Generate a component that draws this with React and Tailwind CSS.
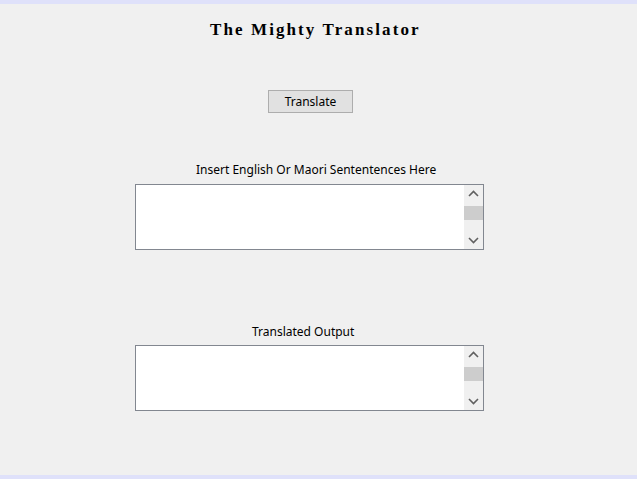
import React from 'react';

const ScrollBox = () => (
  <div className="ml-[135px] w-[349px] h-[66px] border border-[#828790] bg-white flex">
    <div className="flex-1" />
    <div className="w-[19px] bg-[#f0f0f0] flex flex-col items-center">
      <svg width="19" height="17" viewBox="0 0 19 17" className="shrink-0">
        <polyline points="5,11 9.5,6.5 14,11" fill="none" stroke="#606060" strokeWidth="1.6" />
      </svg>
      <div className="w-[19px] h-[14px] bg-[#cdcdcd] mt-[4px]" />
      <div className="flex-1" />
      <svg width="19" height="17" viewBox="0 0 19 17" className="shrink-0">
        <polyline points="5,6 9.5,10.5 14,6" fill="none" stroke="#606060" strokeWidth="1.6" />
      </svg>
    </div>
  </div>
);

export default function App() {
  return (
    <div className="w-[637px] h-[479px] flex flex-col bg-[#f0f0f0] overflow-hidden">
      <div className="h-[4px] bg-[#dfe1fa]" />
      <div className="flex-1 flex flex-col">
        <h1
          className="mt-[14px] ml-[210px] w-fit text-[17px] font-bold tracking-[2.1px] text-black leading-[24px]"
          style={{ fontFamily: '"Liberation Serif", "DejaVu Serif", serif' }}
        >
          The Mighty Translator
        </h1>

        <button
          className="mt-[48px] ml-[268px] w-[85px] h-[23px] border border-[#adadad] bg-[#e1e1e1] text-[12px] text-black leading-none"
          style={{ fontFamily: '"Noto Sans", "Open Sans", sans-serif' }}
        >
          Translate
        </button>

        <div style={{ fontFamily: '"Noto Sans", "Open Sans", sans-serif' }}>
          <p className="mt-[49px] ml-[196px] w-fit text-[12px] leading-[16px] text-black">
            Insert English Or Maori Sententences Here
          </p>
          <div className="mt-[6px]">
            <ScrollBox />
          </div>

          <p className="mt-[74px] ml-[252px] w-fit text-[12px] leading-[16px] text-black">
            Translated Output
          </p>
          <div className="mt-[5px]">
            <ScrollBox />
          </div>
        </div>
      </div>
      <div className="h-[4px] bg-[#dfe1fa]" />
    </div>
  );
}
